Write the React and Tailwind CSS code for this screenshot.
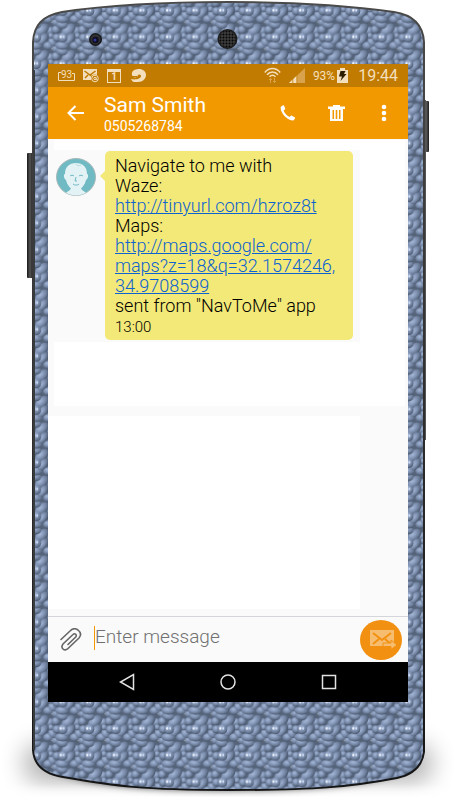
import React, { useState } from 'react';

const FONT = 'font-[Roboto,"Liberation_Sans",sans-serif]';

// One bead of the case texture
const Bead = ({ x, y, rx, ry, turn = 0 }) => (
  <ellipse
    cx={x}
    cy={y}
    rx={rx}
    ry={ry}
    fill="url(#bead)"
    transform={`rotate(${turn} ${x} ${y})`}
  />
);

// Listed back to front, repeated around the tile so the edges join up
const beads = [
  { x: 1, y: 7, rx: 4, ry: 4 },
  { x: 26, y: 22, rx: 5, ry: 4 },
  { x: 7, y: 25, rx: 4, ry: 4 },
  { x: 4, y: 18, rx: 4, ry: 5, turn: -30 },
  { x: 2, y: 12, rx: 3, ry: 3 },
  { x: 7, y: 6, rx: 4, ry: 4 },
  { x: 20, y: 6, rx: 8, ry: 5, turn: -38 },
  { x: 13, y: 1, rx: 6, ry: 4, turn: 8 },
  { x: 13, y: 22, rx: 7, ry: 4, turn: 4 },
  { x: 21, y: 15, rx: 7, ry: 4, turn: -48 },
  { x: 8, y: 14, rx: 4, ry: 4 },
  { x: 14, y: 14, rx: 5, ry: 5 }
];

const TILE = 26.6;
const BODY =
  'M33 70 V42 C34 25 42 16 62 12 C115 4 175 2 228 2 C282 2 345 5 394 12 C414 15 423 25 424 42 V752 C422 768 411 775 397 778 C350 787 315 790 228 790 C143 790 115 786 63 777 C44 774 34 765 33 750 Z';

const PhoneCase = () => (
  <svg
    className="absolute inset-0 h-full w-full"
    viewBox="0 0 456 800"
    preserveAspectRatio="none"
    aria-hidden="true"
  >
    <defs>
      <radialGradient id="bead" cx="0.42" cy="0.32" r="0.68">
        <stop offset="0" stopColor="#a6b8d6" />
        <stop offset="0.4" stopColor="#8799ba" />
        <stop offset="0.75" stopColor="#677893" />
        <stop offset="1" stopColor="#46536a" />
      </radialGradient>
      <pattern id="beads" x="48.7" y="715.3" width={TILE} height={TILE} patternUnits="userSpaceOnUse">
        <rect width="27" height="27" fill="#56647a" />
        {beads.map((b, i) =>
          [-TILE, 0, TILE].map((dx) =>
            [-TILE, 0, TILE].map((dy) => (
              <Bead key={`${i}${dx}${dy}`} {...b} x={b.x + dx} y={b.y + dy} />
            ))
          )
        )}
        <ellipse cx="12" cy="13" rx="1" ry="1.500" fill="#f0f6ff" />
        <ellipse cx="15" cy="13" rx="0.800" ry="1.500" fill="#d3e1fa" />
        <circle cx="3" cy="25" r="0.600" fill="#b9b9ae" />
      </pattern>
      <linearGradient id="rim" x1="0" y1="0" x2="0" y2="1">
        <stop offset="0" stopColor="#4a4a4a" />
        <stop offset="0.3" stopColor="#3a3a3a" />
        <stop offset="1" stopColor="#151515" />
      </linearGradient>
      <linearGradient id="sideKey" x1="0" y1="0" x2="1" y2="0">
        <stop offset="0" stopColor="#171717" />
        <stop offset="0.5" stopColor="#555" />
        <stop offset="1" stopColor="#1d1d1d" />
      </linearGradient>
      <linearGradient id="fade" x1="0" y1="0" x2="0" y2="1">
        <stop offset="0" stopColor="#fff" stopOpacity="0" />
        <stop offset="1" stopColor="#fff" />
      </linearGradient>
      <filter id="soft" x="-30%" y="-60%" width="160%" height="220%">
        <feGaussianBlur stdDeviation="12" />
      </filter>
      <filter id="softer" x="-30%" y="-100%" width="160%" height="300%">
        <feGaussianBlur stdDeviation="6 4" />
      </filter>
    </defs>

    {/* shadow on the ground */}
    <rect x="24" y="744" width="408" height="38" rx="16" fill="#000" opacity="0.3" filter="url(#soft)" />
    <path d="M50 768 Q228 776 406 768 Q340 793 228 793 Q116 793 50 768Z" fill="#000" opacity="0.85" filter="url(#softer)" />
    <rect y="784" width="456" height="14" fill="url(#fade)" />
    <rect y="797" width="456" height="3" fill="#fff" />

    {/* volume and power keys */}
    <rect x="27" y="153" width="6" height="125" rx="1" fill="url(#sideKey)" />
    <rect x="424" y="101" width="5" height="51" rx="1" fill="url(#sideKey)" />
    <path d="M425 100V440" stroke="#555" strokeWidth="2" />

    <path d={BODY} fill="url(#beads)" stroke="url(#rim)" strokeWidth="2" />
    <path d="M34 70V750" stroke="#3a3b3e" strokeWidth="2" />

    {/* front camera */}
    <circle cx="95.500" cy="39.500" r="6.500" fill="#17181b" />
    <circle cx="95.500" cy="39.500" r="5" fill="#303134" />
    <circle cx="95.500" cy="40" r="3.200" fill="#0e0e20" />
    <circle cx="95" cy="40" r="1.500" fill="#34349a" />

    {/* earpiece */}
    <circle cx="227.500" cy="39" r="10" fill="#1d1d1e" />
    <pattern id="holes" width="3" height="3" patternUnits="userSpaceOnUse">
      <rect width="3" height="3" fill="#3c3c3d" />
      <circle cx="1.500" cy="1.500" r="1" fill="#050505" />
    </pattern>
    <circle cx="227.500" cy="39" r="8.500" fill="url(#holes)" />
  </svg>
);

const StatusBar = () => (
  <div className="flex h-[23px] items-center bg-[#c17b00] px-2.5 text-[#f3dfbd]">
    <div className="flex items-center gap-2">
      <div className="relative flex h-[11px] w-[17px] items-center justify-center text-[10px] leading-none">
        <svg className="absolute inset-0" width="17" height="11" fill="none" stroke="currentColor">
          <path d="M3 2.500H.5V10.500H16.500V3.500H14" />
        </svg>
        <span className="pb-0.5">93</span>
      </div>
      <svg width="16" height="14" viewBox="0 0 16 14">
        <path fill="currentColor" d="M0 0h14v11H0z" />
        <path d="M1.500 2l5.500 4 5.500-4M2 9l3-3M7 6l3 2" fill="none" stroke="#c17b00" strokeWidth="1.500" />
        <circle cx="12" cy="9.500" r="4" fill="#c17b00" />
        <circle cx="12" cy="9.500" r="3.300" fill="none" stroke="currentColor" />
        <circle cx="12" cy="9.500" r="1.200" fill="none" stroke="currentColor" />
        <path d="M13.200 8.500v2l1.500.5" fill="none" stroke="currentColor" strokeWidth=".8" />
      </svg>
      <div className="flex h-3.5 w-3.5 items-center justify-center border border-t-3 border-current text-[10px] leading-none font-bold">
        1
      </div>
      <svg className="ml-0.5" width="15" height="13" viewBox="0 0 15 13">
        <path
          fill="currentColor"
          d="M1 6C0 2 4 0 8 0c4 0 7 2.500 7 6s-3 7-8 7H3c-1 0-2-1-3-3 4 1 10 0 10-3 0-1.500-2-2-3-1L6 8C4 9 1.500 8.500 1 6z"
        />
        <path d="M0 7.500h6" stroke="#c17b00" />
      </svg>
    </div>

    <div className="ml-auto flex items-center">
      <svg width="17" height="17" viewBox="0 0 17 17" fill="none" stroke="currentColor">
        <path d="M.8 5.500C5 .2 12 .2 16.200 5.500" strokeWidth="1.500" />
        <path d="M3 7.800C6 4 11 4 14 7.800" strokeWidth="1.500" />
        <path d="M5.500 9.800C7.500 7.800 9.500 7.800 11.500 9.800" strokeWidth="1.500" />
        <path d="M6.500 16v-4.500M5 13l1.500-1.500L8 13M10.500 11v4.500M9 14l1.500 1.500L12 14" stroke="#dba14b" />
      </svg>
      <svg className="ml-2" width="16" height="15" viewBox="0 0 16 15">
        <path d="M0 15L16 0v15z" fill="#d9a24c" />
        <path d="M0 15L8 7.500V15z" fill="#f3dfbd" />
        <path d="M3.800 10v5M7.800 6v9" stroke="#c17b00" strokeWidth=".8" />
      </svg>
      <span className="ml-2 text-xs">93%</span>
      <svg className="ml-0.5" width="11" height="15" viewBox="0 0 11 15">
        <path d="M0 2h3V0h5v2h3v13H0z" fill="#f3dfbd" />
        <path d="M3.500 3h5L7 6h2.500L3.500 13 5 8.500H2z" fill="#2c1c00" />
      </svg>
      <time className="ml-2.5 text-base">19:44</time>
    </div>
  </div>
);

const AppBar = () => (
  <header className="flex h-[52px] items-center bg-[#f29900] text-white">
    <button type="button" aria-label="Back" className="ml-[19px]">
      <svg width="18" height="16" viewBox="0 0 18 16" fill="none" stroke="currentColor" strokeWidth="2">
        <path d="M17 8H2M8.500 1L1.500 8l7 7" />
      </svg>
    </button>
    <div className="ml-[19px] pt-1">
      <h1 className="text-[21px] leading-[22px]">Sam Smith</h1>
      <p className="text-sm leading-5">0505268784</p>
    </div>
    <div className="mr-[21px] ml-auto flex items-center">
      <button type="button" aria-label="Call">
        <svg width="16" height="16" viewBox="0 0 16 16" fill="currentColor">
          <path d="M1.500 1.200L3 .3c.4-.2.8-.1 1 .3l1.200 3c.1.400 0 .7-.3 1L3.600 5.500c1 2.900 3 5 6 6.500l1.200-1.200c.3-.2.600-.3 1-.1l2.900 1.500c.4.200.5.600.3 1l-.9 1.500c-.3.500-.8.800-1.400.7C6.300 14.500 1 8.500.6 2.700c0-.6.3-1.200.9-1.500z" />
        </svg>
      </button>
      <button type="button" aria-label="Delete" className="ml-8">
        <svg width="17" height="16" viewBox="0 0 17 16" fill="currentColor">
          <path d="M5 0h7v1.500h5V4H0V1.500h5z" />
          <path fillRule="evenodd" d="M2 4h13v12H2zM4.500 5v9h1.500V5zM7.700 5v9h1.600V5zM11 5v9h1.500V5z" />
        </svg>
      </button>
      <button type="button" aria-label="More options" className="ml-9">
        <svg width="6" height="18" viewBox="0 0 6 18" fill="currentColor">
          <circle cx="3" cy="3" r="2.300" />
          <circle cx="3" cy="9" r="2.300" />
          <circle cx="3" cy="15" r="2.300" />
        </svg>
      </button>
    </div>
  </header>
);

const Avatar = () => (
  <svg className="mt-[7px] shrink-0" width="40" height="38" viewBox="0 0 40 38" role="img" aria-label="Sam Smith">
    <clipPath id="face">
      <ellipse cx="20" cy="19" rx="19.500" ry="18.500" />
    </clipPath>
    <ellipse cx="20" cy="19" rx="19.500" ry="18.500" fill="#70bac3" stroke="#a5b8ba" />
    <g clipPath="url(#face)" fill="#e3f2f4">
      <path d="M7 40c1-5 4-6 7-8 1-1 1-3 1-5h10c0 2 0 4 1 5 3 2 6 3 7 8z" />
      <path d="M9 16c-2 0-1 5 1 6 1 5 5 10 10 10s9-5 10-10c2-1 3-6 1-6C31 9 27 5 20 5S9 9 9 16z" />
    </g>
    <g fill="none" stroke="#70bac3">
      <path d="M14 18c1-1 3-1 4 0M23 18c1-1 3-1 4 0" />
      <path d="M20 19l-1 4h2M17 26c2 1.500 5 1.500 6 0" />
      <path d="M20 6c1 2 3 2 5 1" stroke="#b5dbe0" />
    </g>
  </svg>
);

const Message = () => (
  <article className="relative ml-[9px] min-w-0 flex-1 rounded-[5px] bg-[#f3e978] pt-[5px] pr-2 pb-0.5 pl-2.5 text-black">
    <svg className="absolute top-5 -left-[5px]" width="5" height="10" fill="#f3e978">
      <path d="M5 0L0 5l5 5z" />
    </svg>
    <p className="text-lg leading-5 font-light">
      Navigate to me with
      <br />
      Waze:
      <br />
      <a href="http://tinyurl.com/hzroz8t" className="text-[#0b62d0] underline">
        http://tinyurl.com/hzroz8t
      </a>
      <br />
      Maps:
      <br />
      <a href="http://maps.google.com/maps?z=18&q=32.1574246,34.9708599" className="text-[#0b62d0] underline">
        http://maps.google.com/
        <br />
        maps?z=18&amp;q=32.1574246,
        <br />
        34.9708599
      </a>
      <br />
      sent from "NavToMe" app
    </p>
    <time className="block text-[15px] leading-[22px] font-light">13:00</time>
  </article>
);

const Composer = () => {
  const [text, setText] = useState('');

  return (
    <form
      className="flex h-[46px] items-center border-t border-[#d5d6dc] bg-[#fafafa] pr-1.5 pl-3"
      onSubmit={(e) => e.preventDefault()}
    >
      <button type="button" aria-label="Attach file">
        <svg width="22" height="23" viewBox="0 0 22 23" fill="none" stroke="#666" strokeWidth="1.600" strokeLinecap="round">
          <path d="M1 11.500L10 3c3-3 6-2.500 8-1 3 2.500 3.500 5 1 8L8 20.500c-2 2-4 1.500-5 .5-1.500-1.500-1.500-3 0-5L13 6.500c1-1 2-.8 2.700-.2.800.8.800 1.700 0 2.700L8 16.500" />
        </svg>
      </button>
      {/* orange text cursor */}
      <span className="mb-1 ml-3 h-6 w-px bg-[#f29900]" />
      <input
        type="text"
        aria-label="Message"
        placeholder="Enter message"
        value={text}
        onChange={(e) => setText(e.target.value)}
        className="mb-1 min-w-0 flex-1 bg-transparent text-[19px] font-light text-black outline-none placeholder:text-[#707070]"
      />
      <button
        type="submit"
        aria-label="Send"
        className="flex h-10 w-[42px] items-center justify-center rounded-[50%] bg-[#f29111]"
      >
        <svg className="ml-1" width="27" height="20" viewBox="0 0 27 20">
          <path d="M0 0h24v16H0z" fill="#f6bd70" />
          <path d="M3 3l9 7 9-7M3 14l6-5M15 9l6 5" fill="none" stroke="#f29111" strokeWidth="2" />
          <path d="M13 13h8v-3l6 5-6 4.500v-3h-8z" fill="#f6bd70" stroke="#f29111" />
        </svg>
      </button>
    </form>
  );
};

const NavBar = () => (
  <nav className="flex h-10 items-center justify-between bg-black px-[71px] text-[#e2e2e2]">
    <button type="button" aria-label="Back">
      <svg width="16" height="18" viewBox="0 0 16 18" fill="none" stroke="currentColor" strokeWidth="1.500">
        <path d="M14.500 1.500v15L1.500 9z" />
      </svg>
    </button>
    <button type="button" aria-label="Home">
      <svg width="16" height="16" viewBox="0 0 16 16" fill="none" stroke="currentColor" strokeWidth="1.500">
        <circle cx="8" cy="8" r="7" />
      </svg>
    </button>
    <button type="button" aria-label="Recent apps">
      <svg width="16" height="16" viewBox="0 0 16 16" fill="none" stroke="currentColor" strokeWidth="1.500">
        <path d="M1.500 1.500h13v13h-13z" />
      </svg>
    </button>
  </nav>
);

const App = () => (
  <div className={`${FONT} relative flex min-h-screen flex-col bg-white px-12 pt-16 pb-[98px]`}>
    <PhoneCase />
    <div className="relative flex flex-1 flex-col">
      <StatusBar />
      <AppBar />
      <main className="flex flex-1 flex-col bg-[#fafafa]">
        <section className="mt-px mr-[3px] ml-1.5 bg-white pt-2.5 pb-16">
          <div className="mr-[45px] flex items-start bg-[#fafafa] pt-px pr-[7px] pb-0.5 pl-0.5">
            <Avatar />
            <Message />
          </div>
        </section>
        <div className="mt-2.5 mr-12 mb-[7px] flex-1 bg-white" />
      </main>
      <Composer />
      <NavBar />
    </div>
  </div>
);

export default App;
